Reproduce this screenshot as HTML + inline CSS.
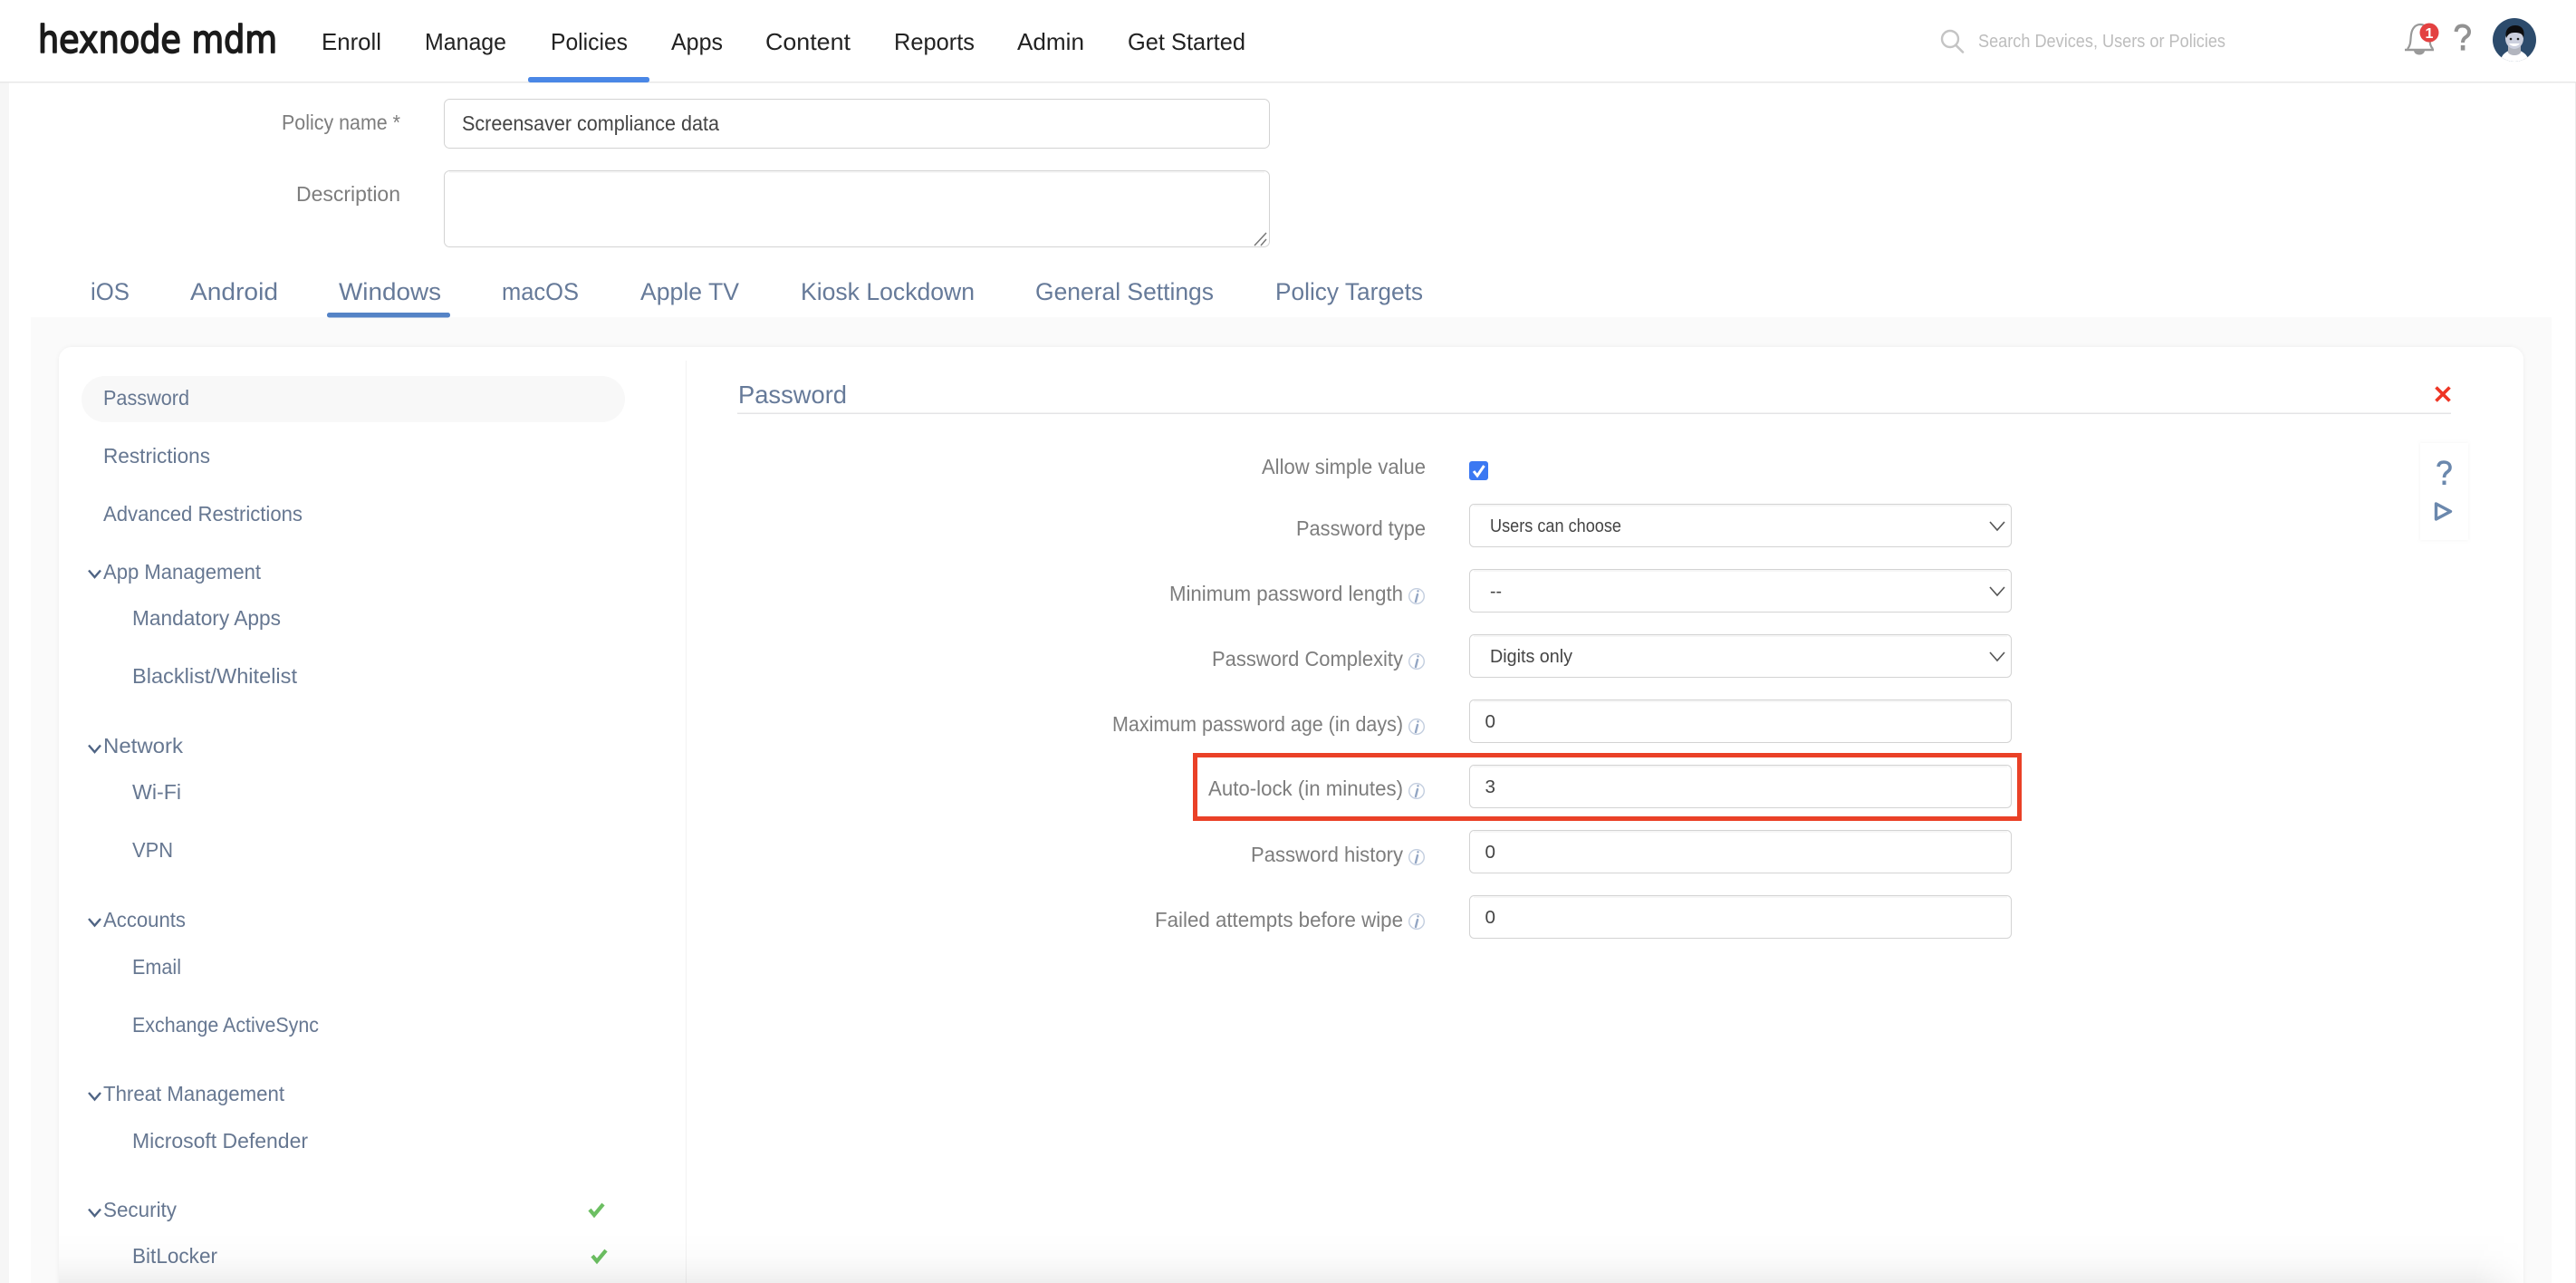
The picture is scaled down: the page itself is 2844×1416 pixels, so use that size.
<!DOCTYPE html>
<html lang="en">
<head>
<meta charset="utf-8">
<title>Hexnode MDM - Policies</title>
<style>
html,body{margin:0;padding:0;background:#fff;width:2844px;height:1416px;overflow:hidden}
svg{display:block;position:absolute;left:0;top:0}
text{font-family:"Liberation Sans",sans-serif}
.nav{font-size:26px;fill:#222}
.tab{font-size:27px;fill:#667a99}
.side{font-size:23px;fill:#667791}
.lab{font-size:23px;fill:#7d7d7d}
.val{font-size:22px;fill:#444}
.sel{font-size:20px;fill:#444}
.box{fill:#fff;stroke:#d3d3d3;stroke-width:1}
.inner{stroke:#f3f3f3;stroke-width:1.5}
.chev{fill:none;stroke:#4f6484;stroke-width:2.4}
.schev{fill:none;stroke:#555;stroke-width:1.6}
.ck{fill:none;stroke:#6cbf62;stroke-width:4.2}
.ic{fill:none;stroke:#c3cedf;stroke-width:1.4}
.ii{fill:none;stroke:#93a6c4;stroke-width:2.4;stroke-linecap:round}
</style>
</head>
<body>
<svg width="2844" height="1416" viewBox="0 0 2844 1416" xmlns="http://www.w3.org/2000/svg">
<defs>
<linearGradient id="fade" x1="0" y1="0" x2="0" y2="1"><stop offset="0" stop-color="#000" stop-opacity="0"/><stop offset=".45" stop-color="#000" stop-opacity=".012"/><stop offset=".75" stop-color="#000" stop-opacity=".035"/><stop offset="1" stop-color="#000" stop-opacity=".065"/></linearGradient>
<linearGradient id="edge" x1="0" y1="0" x2="1" y2="0"><stop offset="0" stop-color="#fff" stop-opacity="1"/><stop offset=".02" stop-color="#fff" stop-opacity="1"/><stop offset=".98" stop-color="#fff" stop-opacity="1"/><stop offset="1" stop-color="#fff" stop-opacity=".15"/></linearGradient>
<mask id="fm"><rect x="65" y="1360" width="2721" height="56" fill="url(#edge)"/></mask>
<filter id="sh" x="-5%" y="-5%" width="110%" height="110%"><feDropShadow dx="0" dy="0" stdDeviation="2.500" flood-color="#000" flood-opacity=".05"/></filter>
<clipPath id="av"><circle cx="2776" cy="44" r="24"/></clipPath>
</defs>

<!-- page backgrounds -->
<rect width="2844" height="1416" fill="#fff"/>
<rect x="0" y="91" width="10" height="1325" fill="#f6f6f6"/>
<rect x="2843" y="91" width="1" height="1325" fill="#ececec"/>
<rect x="34" y="350" width="2783" height="1066" fill="#fafafa"/>
<rect x="65" y="383" width="2721" height="1060" rx="14" fill="#fff" filter="url(#sh)"/>
<rect x="757" y="398" width="1" height="1018" fill="#f2f2f2"/>

<!-- header -->
<rect x="0" y="90" width="2844" height="1.500" fill="#e8e8e8"/>
<text x="42" y="58" font-size="42" textLength="264" lengthAdjust="spacingAndGlyphs" fill="#1b1b1b" stroke="#1b1b1b" stroke-width="1.700" stroke-linejoin="round" style="font-family:'DejaVu Sans',sans-serif">hexnode mdm</text>
<text class="nav" x="355" y="55" textLength="66" lengthAdjust="spacingAndGlyphs">Enroll</text>
<text class="nav" x="469" y="55" textLength="90" lengthAdjust="spacingAndGlyphs">Manage</text>
<text class="nav" x="608" y="55" textLength="85" lengthAdjust="spacingAndGlyphs">Policies</text>
<text class="nav" x="741" y="55" textLength="57" lengthAdjust="spacingAndGlyphs">Apps</text>
<text class="nav" x="845" y="55" textLength="94" lengthAdjust="spacingAndGlyphs">Content</text>
<text class="nav" x="987" y="55" textLength="89" lengthAdjust="spacingAndGlyphs">Reports</text>
<text class="nav" x="1123" y="55" textLength="74" lengthAdjust="spacingAndGlyphs">Admin</text>
<text class="nav" x="1245" y="55" textLength="130" lengthAdjust="spacingAndGlyphs">Get Started</text>
<rect x="583" y="85" width="134" height="6" rx="2.500" fill="#4a87e6"/>

<!-- search -->
<circle cx="2153" cy="43" r="9" fill="none" stroke="#c4c4c4" stroke-width="2.400"/>
<path d="M2159.500 50L2167 57.500" fill="none" stroke="#c4c4c4" stroke-width="2.600" stroke-linecap="round"/>
<text x="2184" y="52" font-size="20" fill="#bdbdbd" textLength="273" lengthAdjust="spacingAndGlyphs">Search Devices, Users or Policies</text>

<!-- bell -->
<path d="M2658 54C2662 49 2661 45 2662 38C2663 31 2667 27 2672 27C2678 27 2682 32 2682 38C2683 46 2682 50 2686 54" fill="none" stroke="#999" stroke-width="2.200"/>
<path d="M2655 55H2687" stroke="#999" stroke-width="2.400"/>
<path d="M2665 56H2677C2676 62 2666 62 2665 56Z" fill="#999"/>
<circle cx="2682" cy="36" r="10.500" fill="#e34141"/>
<text x="2682" y="42" font-size="16" font-weight="bold" fill="#fff" text-anchor="middle">1</text>
<!-- help -->
<path d="M2711.500 35C2712 30 2715 28.500 2718.500 28.500C2723 28.500 2726 31.500 2726 35C2726 39 2723 40.500 2721 42C2719.500 43.500 2719 44.500 2719 47" fill="none" stroke="#929292" stroke-width="4"/>
<rect x="2716.800" y="50" width="4.600" height="5.600" fill="#929292"/>
<!-- avatar -->
<circle cx="2776" cy="44" r="24" fill="#2c4b6c"/>
<g clip-path="url(#av)">
<path d="M2760 70C2761 60 2767 56 2776 54C2785 56 2791 60 2793 70Z" fill="#fff"/>
<path d="M2769 51H2783V58C2780 62 2772 62 2769 58Z" fill="#b2b5be"/>
<ellipse cx="2776" cy="42.500" rx="10" ry="11.500" fill="#ccd0de"/>
<path d="M2767 42C2765 34 2769 28 2777 28C2785 28 2788 34 2786 42C2785 37 2782 36 2776 36C2771 36 2769 38 2767 42Z" fill="#0d0d0f"/>
<circle cx="2772" cy="43" r="1.300" fill="#222"/><circle cx="2780" cy="43" r="1.300" fill="#222"/>
<path d="M2770 48C2773 52 2779 52 2782 48Z" fill="#fff"/>
</g>

<!-- policy meta -->
<text class="lab" x="311" y="143" textLength="131" lengthAdjust="spacingAndGlyphs">Policy name *</text>
<rect class="box" x="490.500" y="109.500" width="911" height="54" rx="6"/>
<text class="val" x="510" y="144" style="font-size:23px" textLength="284" lengthAdjust="spacingAndGlyphs">Screensaver compliance data</text>
<text class="lab" x="327" y="222" textLength="115" lengthAdjust="spacingAndGlyphs">Description</text>
<rect class="box" x="490.500" y="188.500" width="911" height="84" rx="6"/>
<path class="inner" d="M496 190H1396"/>
<path d="M1385 271L1398 257M1392 271L1398 264" stroke="#777" stroke-width="1.500" fill="none"/>

<!-- tabs -->
<text class="tab" x="100" y="331" textLength="43" lengthAdjust="spacingAndGlyphs">iOS</text>
<text class="tab" x="210" y="331" textLength="97" lengthAdjust="spacingAndGlyphs">Android</text>
<text class="tab" x="374" y="331" textLength="113" lengthAdjust="spacingAndGlyphs">Windows</text>
<text class="tab" x="554" y="331" textLength="85" lengthAdjust="spacingAndGlyphs">macOS</text>
<text class="tab" x="707" y="331" textLength="109" lengthAdjust="spacingAndGlyphs">Apple TV</text>
<text class="tab" x="884" y="331" textLength="192" lengthAdjust="spacingAndGlyphs">Kiosk Lockdown</text>
<text class="tab" x="1143" y="331" textLength="197" lengthAdjust="spacingAndGlyphs">General Settings</text>
<text class="tab" x="1408" y="331" textLength="163" lengthAdjust="spacingAndGlyphs">Policy Targets</text>
<rect x="361" y="345" width="136" height="5.500" rx="2.500" fill="#5483c6"/>

<!-- sidebar -->
<rect x="90" y="415" width="600" height="51" rx="25.500" fill="#f8f8f8"/>
<text class="side" x="114" y="447" textLength="95" lengthAdjust="spacingAndGlyphs">Password</text>
<text class="side" x="114" y="511" textLength="118" lengthAdjust="spacingAndGlyphs">Restrictions</text>
<text class="side" x="114" y="575" textLength="220" lengthAdjust="spacingAndGlyphs">Advanced Restrictions</text>
<path class="chev" d="M98 629.500L104.500 637L111 629.500"/>
<text class="side" x="114" y="639" textLength="174" lengthAdjust="spacingAndGlyphs">App Management</text>
<text class="side" x="146" y="690" textLength="164" lengthAdjust="spacingAndGlyphs">Mandatory Apps</text>
<text class="side" x="146" y="754" textLength="182" lengthAdjust="spacingAndGlyphs">Blacklist/Whitelist</text>
<path class="chev" d="M98 822.500L104.500 830L111 822.500"/>
<text class="side" x="114" y="831" textLength="88" lengthAdjust="spacingAndGlyphs">Network</text>
<text class="side" x="146" y="882" textLength="54" lengthAdjust="spacingAndGlyphs">Wi-Fi</text>
<text class="side" x="146" y="946" textLength="45" lengthAdjust="spacingAndGlyphs">VPN</text>
<path class="chev" d="M98 1014L104.500 1021.500L111 1014"/>
<text class="side" x="114" y="1023" textLength="91" lengthAdjust="spacingAndGlyphs">Accounts</text>
<text class="side" x="146" y="1075" textLength="54" lengthAdjust="spacingAndGlyphs">Email</text>
<text class="side" x="146" y="1139" textLength="206" lengthAdjust="spacingAndGlyphs">Exchange ActiveSync</text>
<path class="chev" d="M98 1206L104.500 1213.500L111 1206"/>
<text class="side" x="114" y="1215" textLength="200" lengthAdjust="spacingAndGlyphs">Threat Management</text>
<text class="side" x="146" y="1267" textLength="194" lengthAdjust="spacingAndGlyphs">Microsoft Defender</text>
<path class="chev" d="M98 1334.500L104.500 1342L111 1334.500"/>
<text class="side" x="114" y="1343" textLength="81" lengthAdjust="spacingAndGlyphs">Security</text>
<text class="side" x="146" y="1394" textLength="94" lengthAdjust="spacingAndGlyphs">BitLocker</text>
<path class="ck" d="M651 1335L656 1341L666 1329"/>
<path class="ck" d="M654 1386L659 1392L669 1380"/>

<!-- panel head -->
<text x="815" y="445" font-size="28" fill="#667a99" textLength="120" lengthAdjust="spacingAndGlyphs">Password</text>
<rect x="814" y="455.500" width="1892" height="1.500" fill="#e4e4e6"/>
<path d="M2689.500 427.500L2704.500 442.500M2704.500 427.500L2689.500 442.500" stroke="#ee3524" stroke-width="3.600" fill="none"/>

<!-- side widget -->
<rect x="2672" y="489" width="53" height="107" fill="#fff" filter="url(#sh)"/>
<path d="M2692 515C2692.500 511 2695 510 2698 510C2702 510 2705 512 2705 516C2705 519 2702.500 520.500 2700.500 522C2699 523.500 2698.500 525 2698.500 527" fill="none" stroke="#6b88ad" stroke-width="3.600"/>
<rect x="2696.500" y="530.500" width="4" height="4.500" fill="#6b88ad"/>
<path d="M2689.500 556L2705.500 564.500L2689.500 573Z" fill="none" stroke="#6b88ad" stroke-width="3.400" stroke-linejoin="round"/>

<!-- form -->
<text class="lab" x="1393" y="523" textLength="181" lengthAdjust="spacingAndGlyphs">Allow simple value</text>
<rect x="1622" y="509" width="21" height="21" rx="3" fill="#3b78f2"/>
<path d="M1627 520L1631 525L1638.500 514" fill="none" stroke="#fff" stroke-width="3"/>

<text class="lab" x="1431" y="591" textLength="143" lengthAdjust="spacingAndGlyphs">Password type</text>
<rect class="box" x="1622.500" y="556.500" width="598" height="47" rx="5"/><path class="inner" d="M1627 558H2216"/>
<text class="sel" x="1645" y="587" textLength="145" lengthAdjust="spacingAndGlyphs">Users can choose</text>
<path class="schev" d="M2197 576L2205 585L2213 576"/>

<text class="lab" x="1291" y="663" textLength="258" lengthAdjust="spacingAndGlyphs">Minimum password length</text>
<g><circle class="ic" cx="1564" cy="658" r="8.300"/><path class="ii" d="M1565.500 652.300v.1M1565 656L1563 664"/></g>
<rect class="box" x="1622.500" y="628.500" width="598" height="47" rx="5"/><path class="inner" d="M1627 630H2216"/>
<text class="sel" x="1645" y="659" textLength="13" lengthAdjust="spacingAndGlyphs">--</text>
<path class="schev" d="M2197 648L2205 657L2213 648"/>

<text class="lab" x="1338" y="735" textLength="211" lengthAdjust="spacingAndGlyphs">Password Complexity</text>
<g><circle class="ic" cx="1564" cy="730" r="8.300"/><path class="ii" d="M1565.500 724.300v.1M1565 728L1563 736"/></g>
<rect class="box" x="1622.500" y="700.500" width="598" height="47" rx="5"/><path class="inner" d="M1627 702H2216"/>
<text class="sel" x="1645" y="731" textLength="91" lengthAdjust="spacingAndGlyphs">Digits only</text>
<path class="schev" d="M2197 720L2205 729L2213 720"/>

<text class="lab" x="1228" y="807" textLength="321" lengthAdjust="spacingAndGlyphs">Maximum password age (in days)</text>
<g><circle class="ic" cx="1564" cy="802" r="8.300"/><path class="ii" d="M1565.500 796.300v.1M1565 800L1563 808"/></g>
<rect class="box" x="1622.500" y="772.500" width="598" height="47" rx="5"/><path class="inner" d="M1627 774H2216"/>
<text class="sel" x="1639.500" y="803" textLength="11.500" lengthAdjust="spacingAndGlyphs">0</text>

<rect x="1319.500" y="833.500" width="910" height="70" fill="none" stroke="#ea4127" stroke-width="5"/>
<text class="lab" x="1334" y="878" textLength="215" lengthAdjust="spacingAndGlyphs">Auto-lock (in minutes)</text>
<g><circle class="ic" cx="1564" cy="873" r="8.300"/><path class="ii" d="M1565.500 867.300v.1M1565 871L1563 879"/></g>
<rect class="box" x="1622.500" y="844.500" width="598" height="47" rx="5"/><path class="inner" d="M1627 846H2216"/>
<text class="sel" x="1639.500" y="875" textLength="11.500" lengthAdjust="spacingAndGlyphs">3</text>

<text class="lab" x="1381" y="951" textLength="168" lengthAdjust="spacingAndGlyphs">Password history</text>
<g><circle class="ic" cx="1564" cy="946" r="8.300"/><path class="ii" d="M1565.500 940.300v.1M1565 944L1563 952"/></g>
<rect class="box" x="1622.500" y="916.500" width="598" height="47" rx="5"/><path class="inner" d="M1627 918H2216"/>
<text class="sel" x="1639.500" y="947" textLength="11.500" lengthAdjust="spacingAndGlyphs">0</text>

<text class="lab" x="1275" y="1023" textLength="274" lengthAdjust="spacingAndGlyphs">Failed attempts before wipe</text>
<g><circle class="ic" cx="1564" cy="1017" r="8.300"/><path class="ii" d="M1565.500 1011.300v.1M1565 1015L1563 1023"/></g>
<rect class="box" x="1622.500" y="988.500" width="598" height="47" rx="5"/><path class="inner" d="M1627 990H2216"/>
<text class="sel" x="1639.500" y="1019" textLength="11.500" lengthAdjust="spacingAndGlyphs">0</text>

<!-- bottom fade -->
<rect x="65" y="1360" width="2721" height="56" fill="url(#fade)" mask="url(#fm)"/>
</svg>
</body>
</html>
